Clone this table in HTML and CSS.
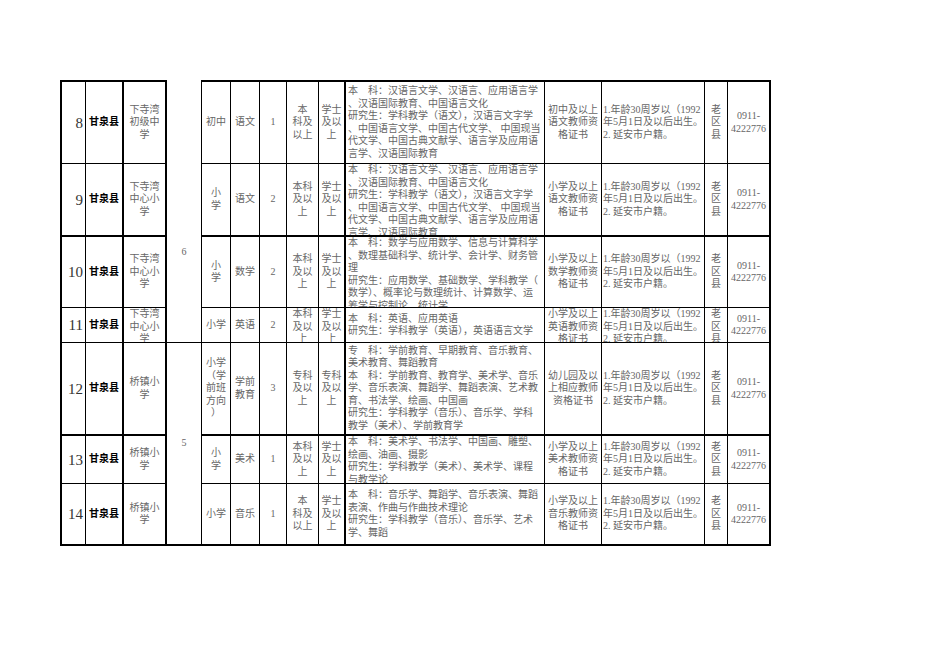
FILE: index.html
```html
<!DOCTYPE html>
<html lang="zh-CN">
<head>
<meta charset="utf-8">
<title>招聘岗位表</title>
<link rel="stylesheet" href="styles.css">
</head>
<body>
<div class="page">
  <div class="sheet">
    <div class="row r8">
      <div class="c num tl"><span>8</span></div>
      <div class="c cty"><span>甘泉县</span></div>
      <div class="c tl"><span>下寺湾<br>初级中<br>学</span></div>
      <div class="c tl notop"></div>
      <div class="c"><span>初中</span></div>
      <div class="c"><span>语文</span></div>
      <div class="c"><span>1</span></div>
      <div class="c"><span>本<br>科及<br>以上</span></div>
      <div class="c"><span>学士<br>及以<br>上</span></div>
      <div class="c tl l"><span>本　科：汉语言文学、汉语言、应用语言学<br>、汉语国际教育、中国语言文化<br>研究生：学科教学（语文），汉语言文字学<br>、中国语言文学、中国古代文学、 中国现当<br>代文学、中国古典文献学、语言学及应用语<br>言学、汉语国际教育</span></div>
      <div class="c"><span>初中及以上<br>语文教师资<br>格证书</span></div>
      <div class="c l req"><span>1.年龄30周岁以（1992<br>年5月1日及以后出生。<br>2. 延安市户籍。</span></div>
      <div class="c"><span>老<br>区<br>县</span></div>
      <div class="c"><span>0911-<br>4222776</span></div>
    </div>
    <div class="row r9">
      <div class="c num tl"><span>9</span></div>
      <div class="c cty"><span>甘泉县</span></div>
      <div class="c tl"><span>下寺湾<br>中心小<br>学</span></div>
      <div class="c tl notop span6"><span>6</span></div>
      <div class="c"><span>小<br>学</span></div>
      <div class="c"><span>语文</span></div>
      <div class="c"><span>2</span></div>
      <div class="c"><span>本科<br>及以<br>上</span></div>
      <div class="c"><span>学士<br>及以<br>上</span></div>
      <div class="c tl l"><span>本　科：汉语言文学、汉语言、应用语言学<br>、汉语国际教育、中国语言文化<br>研究生：学科教学（语文），汉语言文字学<br>、中国语言文学、中国古代文学、 中国现当<br>代文学、中国古典文献学、语言学及应用语<br>言学、汉语国际教育</span></div>
      <div class="c"><span>小学及以上<br>语文教师资<br>格证书</span></div>
      <div class="c l req"><span>1.年龄30周岁以（1992<br>年5月1日及以后出生。<br>2. 延安市户籍。</span></div>
      <div class="c"><span>老<br>区<br>县</span></div>
      <div class="c"><span>0911-<br>4222776</span></div>
    </div>
    <div class="row r10">
      <div class="c num tl"><span>10</span></div>
      <div class="c cty"><span>甘泉县</span></div>
      <div class="c tl"><span>下寺湾<br>中心小<br>学</span></div>
      <div class="c"><span>小<br>学</span></div>
      <div class="c"><span>数学</span></div>
      <div class="c"><span>2</span></div>
      <div class="c"><span>本科<br>及以<br>上</span></div>
      <div class="c"><span>学士<br>及以<br>上</span></div>
      <div class="c tl l"><span>本　科：数学与应用数学、信息与计算科学<br>、数理基础科学、统计学、会计学、财务管<br>理<br>研究生：应用数学、基础数学、学科教学（<br>数学）、概率论与数理统计、计算数学、运<br>筹学与控制论、统计学</span></div>
      <div class="c"><span>小学及以上<br>数学教师资<br>格证书</span></div>
      <div class="c l req"><span>1.年龄30周岁以（1992<br>年5月1日及以后出生。<br>2. 延安市户籍。</span></div>
      <div class="c"><span>老<br>区<br>县</span></div>
      <div class="c"><span>0911-<br>4222776</span></div>
    </div>
    <div class="row r11">
      <div class="c num tl"><span>11</span></div>
      <div class="c cty"><span>甘泉县</span></div>
      <div class="c tl"><span>下寺湾<br>中心小<br>学</span></div>
      <div class="c"><span>小学</span></div>
      <div class="c"><span>英语</span></div>
      <div class="c"><span>2</span></div>
      <div class="c"><span>本科<br>及以<br>上</span></div>
      <div class="c"><span>学士<br>及以<br>上</span></div>
      <div class="c tl l"><span>本　科：英语、应用英语<br>研究生：学科教学（英语），英语语言文学</span></div>
      <div class="c"><span>小学及以上<br>英语教师资<br>格证书</span></div>
      <div class="c l req"><span>1.年龄30周岁以（1992<br>年5月1日及以后出生。<br>2. 延安市户籍。</span></div>
      <div class="c"><span>老<br>区<br>县</span></div>
      <div class="c"><span>0911-<br>4222776</span></div>
    </div>
    <div class="row r12">
      <div class="c num tl"><span>12</span></div>
      <div class="c cty"><span>甘泉县</span></div>
      <div class="c tl"><span>桥镇小<br>学</span></div>
      <div class="c tl span5"><span>5</span></div>
      <div class="c"><span>小学<br>（学<br>前班<br>方向<br>）</span></div>
      <div class="c"><span>学前<br>教育</span></div>
      <div class="c"><span>3</span></div>
      <div class="c"><span>专科<br>及以<br>上</span></div>
      <div class="c"><span>专科<br>及以<br>上</span></div>
      <div class="c tl l"><span>专　科：学前教育、早期教育、音乐教育、<br>美术教育、舞蹈教育<br>本　科：学前教育、教育学、美术学、音乐<br>学、音乐表演、舞蹈学、舞蹈表演、艺术教<br>育、书法学、绘画、中国画<br>研究生：学科教学（音乐）、音乐学、学科<br>教学（美术）、学前教育学</span></div>
      <div class="c"><span>幼儿园及以<br>上相应教师<br>资格证书</span></div>
      <div class="c l req"><span>1.年龄30周岁以（1992<br>年5月1日及以后出生。<br>2. 延安市户籍。</span></div>
      <div class="c"><span>老<br>区<br>县</span></div>
      <div class="c"><span>0911-<br>4222776</span></div>
    </div>
    <div class="row r13">
      <div class="c num tl"><span>13</span></div>
      <div class="c cty"><span>甘泉县</span></div>
      <div class="c tl"><span>桥镇小<br>学</span></div>
      <div class="c"><span>小<br>学</span></div>
      <div class="c"><span>美术</span></div>
      <div class="c"><span>1</span></div>
      <div class="c"><span>本科<br>及以<br>上</span></div>
      <div class="c"><span>学士<br>及以<br>上</span></div>
      <div class="c tl l"><span>本　科：美术学、书法学、中国画、雕塑、<br>绘画、油画、摄影<br>研究生：学科教学（美术）、美术学、课程<br>与教学论</span></div>
      <div class="c"><span>小学及以上<br>美术教师资<br>格证书</span></div>
      <div class="c l req"><span>1.年龄30周岁以（1992<br>年5月1日及以后出生。<br>2. 延安市户籍。</span></div>
      <div class="c"><span>老<br>区<br>县</span></div>
      <div class="c"><span>0911-<br>4222776</span></div>
    </div>
    <div class="row r14">
      <div class="c num tl"><span>14</span></div>
      <div class="c cty"><span>甘泉县</span></div>
      <div class="c tl"><span>桥镇小<br>学</span></div>
      <div class="c"><span>小学</span></div>
      <div class="c"><span>音乐</span></div>
      <div class="c"><span>1</span></div>
      <div class="c"><span>本<br>科及<br>以上</span></div>
      <div class="c"><span>学士<br>及以<br>上</span></div>
      <div class="c tl l"><span>本　科：音乐学、舞蹈学、音乐表演、舞蹈<br>表演、作曲与作曲技术理论<br>研究生：学科教学（音乐）、音乐学、艺术<br>学、舞蹈</span></div>
      <div class="c"><span>小学及以上<br>音乐教师资<br>格证书</span></div>
      <div class="c l req"><span>1.年龄30周岁以（1992<br>年5月1日及以后出生。<br>2. 延安市户籍。</span></div>
      <div class="c"><span>老<br>区<br>县</span></div>
      <div class="c"><span>0911-<br>4222776</span></div>
    </div>
  </div>
</div>
</body>
</html>
```
FILE: styles.css
```css
html, body {
  margin: 0;
  padding: 0;
  background: #fff;
}

.page {
  padding: 80px 0 0 60px;
}

.sheet {
  display: grid;
  width: max-content;
  grid-template-columns: 25px 37px 43px 36px 29px 29px 27px 32px 26px 200px 57px 103px 23px 42px;
  grid-template-rows: 83px 72px 72px 35px 92px 49px 61px;
  border-right: 2px solid #000;
  border-bottom: 2px solid #000;
  font-family: "Liberation Serif", "Noto Sans CJK SC", serif;
  font-size: 10px;
  line-height: 12.5px;
  color: #666;
}

.row {
  display: contents;
}

.c {
  box-sizing: border-box;
  display: flex;
  justify-content: center;
  text-align: center;
  overflow: hidden;
  white-space: nowrap;
  border-left: 1px solid #000;
  border-top: 1px solid #000;
  min-width: 0;
  min-height: 0;
}

.c > span {
  margin-top: auto;
  margin-bottom: auto;
}

.tl {
  border-left-width: 2px;
}

.r8 > .c,
.r10 > .c,
.r13 > .c {
  border-top-width: 2px;
}

.row > .c.notop {
  border-top: none;
}

.l {
  justify-content: flex-start;
  text-align: left;
  padding-left: 2px;
}

.l.req {
  padding-left: 1px;
}

.num {
  justify-content: flex-end;
  padding-right: 2px;
  font-size: 15px;
  line-height: 16px;
  color: #333;
}

.cty {
  font-weight: bold;
  color: #000;
}

.span6 {
  grid-column: 4;
  grid-row: 2 / span 3;
}

.span5 {
  grid-column: 4;
  grid-row: 5 / span 3;
}
```
